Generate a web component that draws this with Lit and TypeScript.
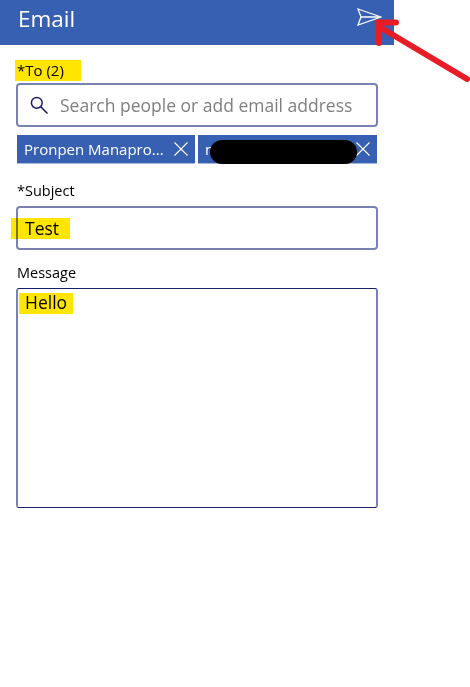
import { LitElement, html, css } from 'lit';
import { customElement, state } from 'lit/decorators.js';

@customElement('app-root')
class AppRoot extends LitElement {
  @state()
  private recipients = ['Pronpen Manapro...', 'n'];

  static styles = css`
    :host {
      display: block;
      position: relative;
      width: 470px;
      height: 687px;
      background: #fff;
      overflow: hidden;
      font-family: 'Open Sans', 'Liberation Sans', sans-serif;
      color: #000;
    }

    .header {
      width: 394px;
      height: 45px;
      box-sizing: border-box;
      padding: 0 12px 0 18px;
      background: #3860b2;
      color: #fff;
      display: flex;
      align-items: center;
      justify-content: space-between;
    }

    .title {
      font-size: 22.5px;
      line-height: 38px;
      margin-top: -8px;
    }

    .send {
      display: block;
      margin-top: -12px;
    }

    .form {
      width: 360px;
      margin-left: 17px;
      display: flex;
      flex-direction: column;
    }

    .label {
      font-size: 14.5px;
      line-height: 20px;
      height: 20px;
    }

    .mark {
      background: #ffe500;
      mix-blend-mode: multiply;
    }

    .to-label {
      margin-top: 15px;
      margin-left: -2px;
      width: 66px;
      height: 21px;
      padding-left: 2px;
      box-sizing: border-box;
      font-size: 15px;
    }

    .box {
      box-sizing: border-box;
      margin: 0 -1px;
      border: 2px solid #7a82b3;
      border-radius: 4px;
      background: #fff;
    }

    .search {
      height: 44px;
      margin-top: 2px;
      display: flex;
      align-items: center;
      padding-left: 12px;
      font-size: 17.5px;
      color: #7f7f7f;
    }

    .search svg {
      display: block;
      margin-right: 12px;
    }

    .chips {
      display: flex;
      gap: 3px;
      margin-top: 8px;
    }

    .chip {
      width: 178px;
      height: 29px;
      box-sizing: border-box;
      padding: 0 7px;
      background: #3860b2;
      color: #fff;
      font-size: 15px;
      display: flex;
      align-items: center;
      justify-content: space-between;
      border-bottom: 1px solid #a9b9dc;
      white-space: nowrap;
    }

    .chip + .chip {
      width: 179px;
    }

    .redact {
      position: absolute;
      left: 210px;
      top: 140px;
      width: 147px;
      height: 24px;
      border-radius: 12px;
      background: #000;
    }

    .subject-label {
      margin-top: 17px;
    }

    .subject {
      height: 44px;
      margin-top: 5px;
      display: flex;
      align-items: center;
    }

    .typed {
      font-size: 17.5px;
      line-height: 21px;
      height: 21px;
    }

    .subject .typed {
      width: 59px;
      margin-left: -7px;
      padding-left: 14px;
      box-sizing: border-box;
      margin-top: 1px;
    }

    .message-label {
      margin-top: 13px;
    }

    .message {
      height: 220px;
      margin-top: 5px;
      border-width: 1px 2px;
      border-color: #1a2068 #7a82b3;
      border-radius: 3px;
      padding: 4px 0 0 1px;
    }

    .message .typed {
      width: 54px;
      padding-left: 6px;
      box-sizing: border-box;
      line-height: 18px;
    }

    .arrow {
      position: absolute;
      left: 0;
      top: 0;
      pointer-events: none;
    }
  `;

  render() {
    return html`
      <div class="header">
        <div class="title">Email</div>
        <svg class="send" width="25" height="18" viewBox="0 0 25 18" fill="none" stroke="#fff" stroke-width="1.3">
          <path d="M1 1 L24 9 L1 17 L4 9 Z M4 9 H24" stroke-linejoin="miter" />
        </svg>
      </div>
      <div class="form">
        <div class="label mark to-label">*To (2)</div>
        <div class="box search">
          <svg width="18" height="18" viewBox="0 0 18 18" fill="none" stroke="#1a2068" stroke-width="1.5">
            <circle cx="6.8" cy="6.8" r="5.4" />
            <path d="M10.6 10.6 L17.5 17.5" />
          </svg>
          Search people or add email address
        </div>
        <div class="chips">
          ${this.recipients.map(
            (name) => html`
              <div class="chip">
                <span>${name}</span>
                <svg width="14" height="14" viewBox="0 0 14 14" stroke="#fff" stroke-width="1.1">
                  <path d="M0.5 0.5 L13.5 13.5 M13.5 0.5 L0.5 13.5" />
                </svg>
              </div>
            `
          )}
        </div>
        <div class="label subject-label">*Subject</div>
        <div class="box subject">
          <div class="typed mark">Test</div>
        </div>
        <div class="label message-label">Message</div>
        <div class="box message">
          <div class="typed mark">Hello</div>
        </div>
      </div>
      <div class="redact"></div>
      <svg class="arrow" width="470" height="687" fill="none" stroke="#e81c24" stroke-width="6" stroke-linecap="round" stroke-linejoin="round">
        <path d="M467 79 L378 26 M378 22.5 H396 M379 22.5 V43" />
      </svg>
    `;
  }
}

export default AppRoot;
